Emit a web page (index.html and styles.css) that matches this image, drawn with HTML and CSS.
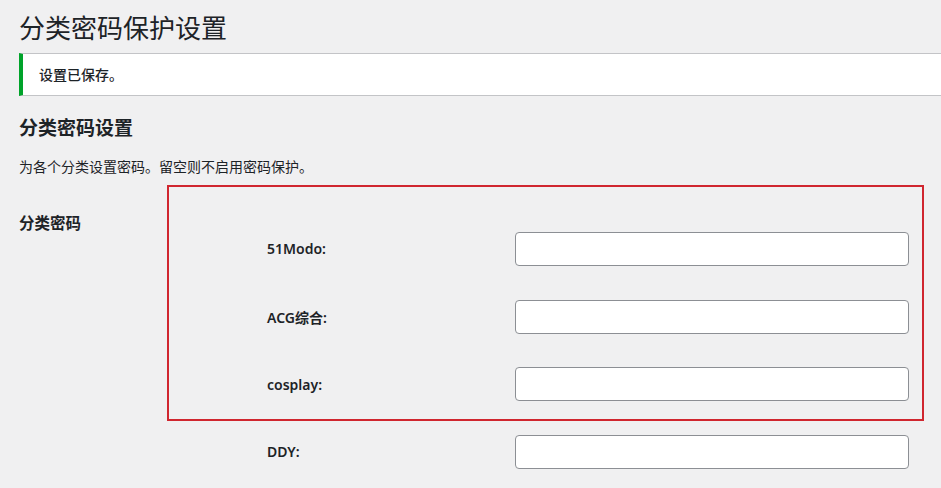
FILE: index.html
```
<!DOCTYPE html>
<html lang="zh-CN">
<head>
   <meta charset="UTF-8">
   <meta name="viewport" content="width=device-width, initial-scale=1.0">
   <title>分类密码保护设置</title>
   <link rel="stylesheet" href="styles.css">
</head>
<body>
   <div class="wrap">
       <h1>分类密码保护设置</h1>

       <div class="notice">
           <p>设置已保存。</p>
       </div>

       <h2>分类密码设置</h2>
       <p class="description">为各个分类设置密码。留空则不启用密码保护。</p>

       <div class="settings">
           <div class="settings-label">分类密码</div>
           <div class="field-table">
               <label for="cat-51modo">51Modo:</label>
               <input type="text" id="cat-51modo">

               <label for="cat-acg">ACG综合:</label>
               <input type="text" id="cat-acg">

               <label for="cat-cosplay">cosplay:</label>
               <input type="text" id="cat-cosplay">

               <label for="cat-ddy">DDY:</label>
               <input type="text" id="cat-ddy">
           </div>
           <div class="highlight"></div>
       </div>
   </div>
</body>
</html>
```

FILE: styles.css
```
html, body {
    margin: 0;
    overflow: hidden;
}

body {
    background: #f0f0f1;
    color: #1d2327;
    font-family: "Noto Sans", "Noto Sans CJK SC", sans-serif;
    font-size: 13px;
}

.wrap {
    padding-left: 19px;
}

h1 {
    margin: 0;
    padding-top: 11px;
    font-size: 26px;
    font-weight: 400;
    line-height: 34px;
}

.notice {
    margin: 8px -20px 0 0;
    background: #fff;
    border: 1px solid #c3c4c7;
    border-left: 4px solid #00a32a;
    padding: 11px 16px;
}

.notice p {
    margin: 0;
    font-size: 14px;
    line-height: 19px;
    font-weight: 500;
}

h2 {
    margin: 19px 0 0;
    font-size: 19px;
    line-height: 26px;
    font-weight: 700;
}

.description {
    margin: 16px 0 0;
    font-size: 14px;
    line-height: 20px;
}

.settings {
    position: relative;
    display: flex;
    margin-top: 28px;
}

.settings-label {
    width: 0;
    white-space: nowrap;
    padding-top: 8px;
    font-size: 15.5px;
    font-weight: 700;
    line-height: 20px;
}

.field-table {
    display: grid;
    grid-template-columns: 248px 394px;
    grid-auto-rows: 67.7px;
    align-items: center;
    margin-left: 248px;
    padding-top: 10px;
}

.field-table label {
    font-size: 14px;
    font-weight: 600;
}

.field-table input {
    box-sizing: border-box;
    height: 34px;
    width: 100%;
    margin: 0;
    background: #fff;
    border: 1px solid #8c8f94;
    border-radius: 4px;
    padding: 0 8px;
    font: inherit;
}

.highlight {
    position: absolute;
    left: 148px;
    top: -20px;
    width: 753px;
    height: 232px;
    border: 2px solid #d0262f;
    pointer-events: none;
}
```
